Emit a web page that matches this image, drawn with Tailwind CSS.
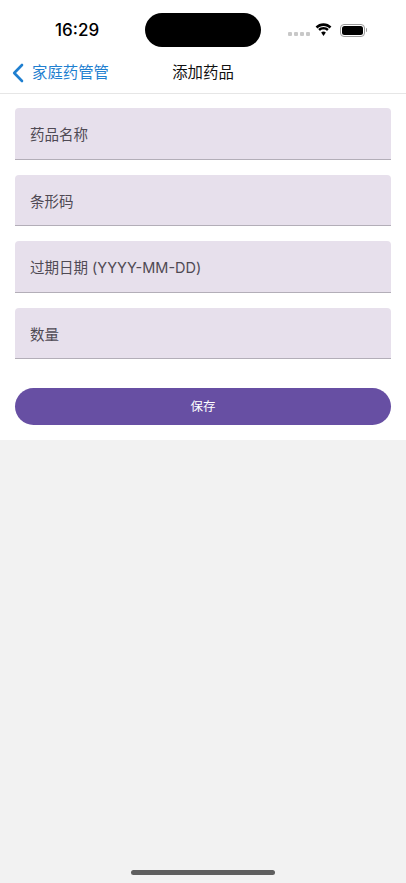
<!DOCTYPE html>
<html lang="zh">
<head>
<meta charset="UTF-8">
<title>添加药品</title>
<script src="https://cdn.jsdelivr.net/npm/@tailwindcss/browser@4"></script>
</head>
<body class="w-[406px] h-[883px] overflow-hidden bg-[#f2f2f2] font-['Inter','Noto_Sans_CJK_SC',sans-serif]">
  <!-- status bar + nav -->
  <header class="h-[94px] bg-white border-b border-[#e6e6e6] flex flex-col">
    <div class="h-[58px] relative">
      <span class="absolute left-[55px] top-[20px] text-[17px] leading-[20px] font-medium text-black">16:29</span>
      <div class="absolute left-[145px] top-[13px] w-[116px] h-[34px] bg-black rounded-full"></div>
      <div class="absolute left-[288px] top-[32px] flex gap-[2px]">
        <span class="w-[4px] h-[4px] bg-[#c8c8c8] rounded-[1px]"></span>
        <span class="w-[4px] h-[4px] bg-[#c8c8c8] rounded-[1px]"></span>
        <span class="w-[4px] h-[4px] bg-[#c8c8c8] rounded-[1px]"></span>
        <span class="w-[4px] h-[4px] bg-[#c8c8c8] rounded-[1px]"></span>
      </div>
      <svg class="absolute left-[315px] top-[23px]" width="17" height="14" viewBox="0 0 17 14">
        <path d="M8.500 2.900c2.400 0 4.500.9 6.100 2.500L16.400 3.600C14.300 1.500 11.500.3 8.500.3S2.700 1.500.6 3.600L2.400 5.400C4 3.800 6.100 2.900 8.500 2.900z" fill="#000"/>
        <path d="M8.500 6.500c1.400 0 2.600.5 3.500 1.400l1.800-1.800C12.400 4.700 10.500 3.900 8.500 3.900s-3.900.8-5.300 2.200L5 7.900c.9-.9 2.100-1.400 3.500-1.400z" fill="#000"/>
        <path d="M8.500 8.500c-.9 0-1.700.3-2.300 1l2.300 3.500 2.300-3.500c-.6-.7-1.400-1-2.300-1z" fill="#000"/>
      </svg>
      <div class="absolute left-[340px] top-[24px] w-[25px] h-[13px] border border-[#9a9a9a] rounded-[4px] p-[1px]">
        <div class="w-full h-full bg-black rounded-[2.500px]"></div>
      </div>
      <div class="absolute left-[366px] top-[28px] w-[1px] h-[4px] bg-[#9a9a9a] rounded-r-sm"></div>
    </div>
    <nav class="relative h-[30px] flex items-center">
      <svg class="ml-[12px]" width="12" height="20" viewBox="0 0 12 20" fill="none">
        <path d="M10 2 2.200 10 10 18" stroke="#1f7fd0" stroke-width="2.600" stroke-linecap="round" stroke-linejoin="round"/>
      </svg>
      <span class="ml-[8px] text-[15.400px] text-[#1f7fd0]">家庭药管管</span>
      <span class="absolute left-0 right-0 text-center text-[15.400px] text-[#111111]">添加药品</span>
    </nav>
  </header>

  <!-- form -->
  <main class="h-[346px] bg-white px-[15px] pt-[14px]">
    <div class="flex flex-col gap-[15px]">
      <div class="h-[51.500px] bg-[#e7e0ec] rounded-t-[4px] border-b border-[#b3aeb8] flex items-center px-[15px] pt-[4px] text-[14.500px] text-[#4f4a54]">药品名称</div>
      <div class="h-[51.500px] bg-[#e7e0ec] rounded-t-[4px] border-b border-[#b3aeb8] flex items-center px-[15px] pt-[4px] text-[14.500px] text-[#4f4a54]">条形码</div>
      <div class="h-[51.500px] bg-[#e7e0ec] rounded-t-[4px] border-b border-[#b3aeb8] flex items-center px-[15px] pt-[4px] text-[14.500px] text-[#4f4a54]">过期日期 (YYYY-MM-DD)</div>
      <div class="h-[51.500px] bg-[#e7e0ec] rounded-t-[4px] border-b border-[#b3aeb8] flex items-center px-[15px] pt-[4px] text-[14.500px] text-[#4f4a54]">数量</div>
    </div>
    <button class="mt-[29px] w-full h-[37px] rounded-full bg-[#674fa3] text-white text-[12.500px] pt-[2px] flex items-center justify-center">保存</button>
  </main>

  <div class="absolute left-[131px] top-[870px] w-[144px] h-[5px] rounded-full bg-[#5f5f5f]"></div>
</body>
</html>
